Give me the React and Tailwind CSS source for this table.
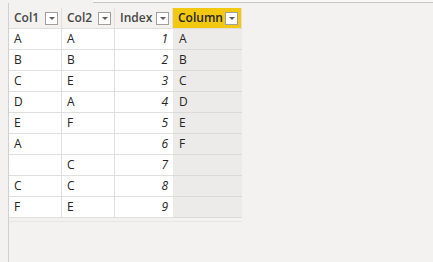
import React from 'react';

const rows = [
  ['A', 'A', 1, 'A'],
  ['B', 'B', 2, 'B'],
  ['C', 'E', 3, 'C'],
  ['D', 'A', 4, 'D'],
  ['E', 'F', 5, 'E'],
  ['A', '', 6, 'F'],
  ['', 'C', 7, ''],
  ['C', 'C', 8, ''],
  ['F', 'E', 9, ''],
];

const headers = [
  { name: 'Col1', w: 'w-[53px]' },
  { name: 'Col2', w: 'w-[53px]' },
  { name: 'Index', w: 'w-[58px]' },
  { name: 'Column', w: 'w-[69px]', active: true },
];

const Caret = () => (
  <span className="flex h-[13px] w-[13px] items-center justify-center border border-[#a19f9d] bg-white">
    <svg width="6" height="3" viewBox="0 0 6 3">
      <path d="M0 0h6L3 3z" fill="#605e5c" />
    </svg>
  </span>
);

export default function App() {
  return (
    <div
      className="relative h-[262px] w-[433px] overflow-hidden bg-[#f3f2f1] text-[12px] text-[#252423]"
      style={{ fontFamily: '"Open Sans", "Noto Sans", sans-serif' }}
    >
      {/* top strip */}
      <div className="flex h-[3px]">
        <div className="w-[93px]" />
        <div className="flex-1 border-b border-[#c8c6c4] bg-[#f8f8f8]" />
      </div>

      <div className="flex h-[259px]">
        <div className="w-[9px] border-r border-[#d2d0ce]" />
        <div className="pt-[5px]">
          {/* header */}
          <div className="flex h-[21px]">
            {headers.map((h) => (
              <div
                key={h.name}
                className={`${h.w} flex items-center justify-between border-r border-b border-[#e1dfdd] pl-[5px] pr-[3px] font-semibold ${
                  h.active ? 'bg-[#f2c811] text-[#252423]' : 'bg-[#f3f2f1] text-[#484644]'
                }`}
              >
                <span>{h.name}</span>
                <Caret />
              </div>
            ))}
          </div>

          {/* rows */}
          {rows.map((r, i) => (
            <div key={i} className="flex h-[21px]">
              <div className="flex w-[53px] items-center border-r border-b border-[#e1dfdd] bg-white pl-[5px]">{r[0]}</div>
              <div className="flex w-[53px] items-center border-r border-b border-[#e1dfdd] bg-white pl-[5px]">{r[1]}</div>
              <div className="flex w-[58px] items-center justify-end border-b border-[#e1dfdd] bg-white pr-[5px] italic">{r[2]}</div>
              <div className="flex w-[69px] items-center border-b border-[#dcdad8] bg-[#edebe9] pl-[6px]">{r[3]}</div>
            </div>
          ))}
          <div className="mt-[3px] h-[1px] w-[233px] bg-[#e8e6e4]" />
        </div>
      </div>
    </div>
  );
}
